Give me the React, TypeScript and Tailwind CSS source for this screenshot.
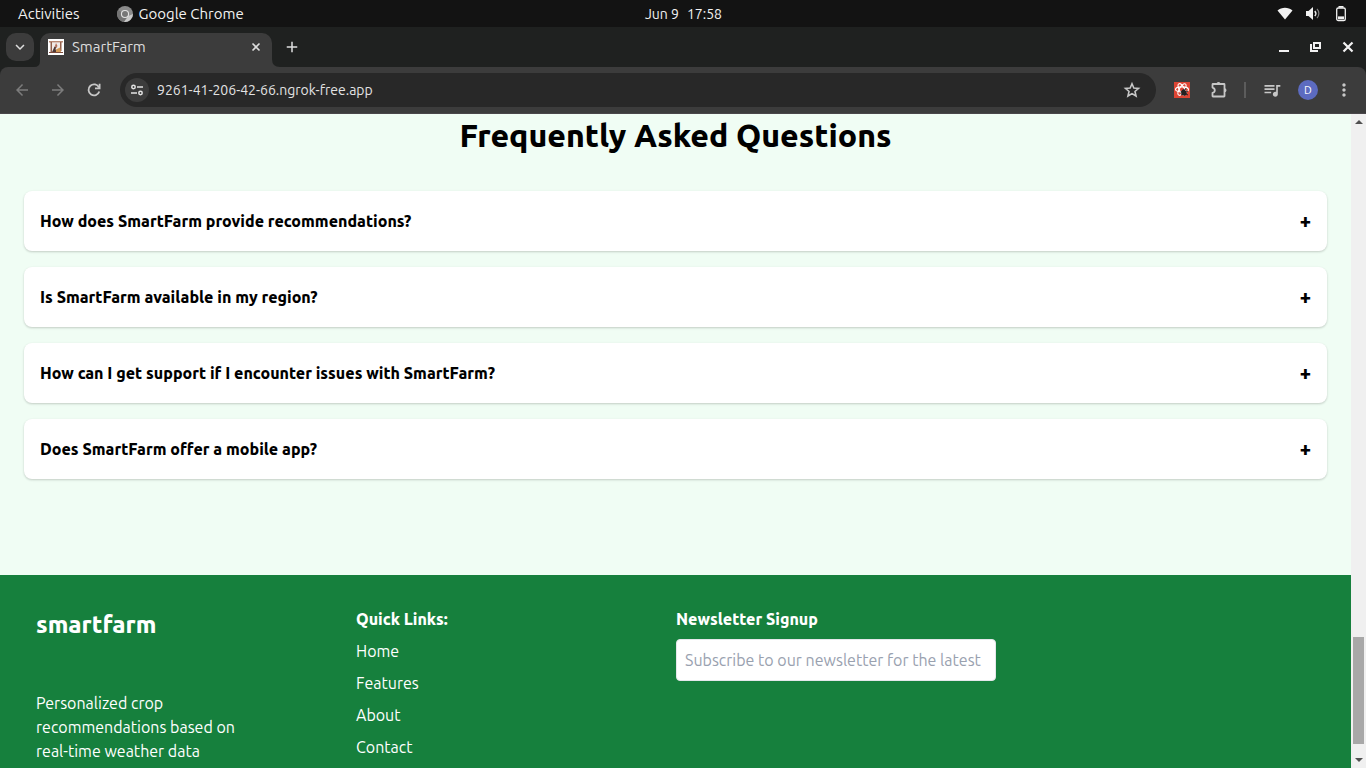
import { useState } from "react";
import {
  MdAdd,
  MdArrowBack,
  MdArrowForward,
  MdKeyboardArrowDown,
  MdMoreVert,
  MdQueueMusic,
} from "react-icons/md";

const questions = [
  {
    question: "How does SmartFarm provide recommendations?",
    answer: "SmartFarm combines local weather and soil data.",
  },
  {
    question: "Is SmartFarm available in my region?",
    answer: "SmartFarm works wherever weather data is available.",
  },
  {
    question: "How can I get support if I encounter issues with SmartFarm?",
    answer: "Reach our team through the contact page.",
  },
  {
    question: "Does SmartFarm offer a mobile app?",
    answer: "SmartFarm runs in any mobile browser.",
  },
];

const links = ["Home", "Features", "About", "Contact"];

function ChromeGlyph() {
  return (
    <svg viewBox="0 0 16 16" className="size-4" aria-hidden="true">
      <circle cx="8" cy="8" r="8" fill="#8b8b8b" />
      <path d="M8 8 1.1 4A8 8 0 0 0 7 15.9L10.5 10Z" fill="#737373" />
      <path d="M11.4 10 16 8A8 8 0 0 1 7 15.9Z" fill="#c9c9c9" />
      <circle cx="8" cy="8" r="4.1" fill="#e4e4e4" />
      <circle cx="8" cy="8" r="3" fill="#777" />
    </svg>
  );
}

function StatusIcons() {
  return (
    <div className="flex items-center gap-3 text-[#f2f2f2]">
      <svg viewBox="0 0 16 16" className="size-4" fill="currentColor" aria-label="Wi-Fi">
        <path d="M.5 4.5C4.7.8 11.300.8 15.500 4.500L8 13.500Z" />
      </svg>
      <svg viewBox="0 0 16 16" className="size-4" fill="none" stroke="currentColor" aria-label="Volume">
        <path d="M1 5h2.500L8 1v13L3.500 10H1Z" fill="currentColor" stroke="none" />
        <path d="M9.800 5c1.300 1.500 1.300 3.500 0 5" strokeWidth="1.400" />
        <path d="M12 3c2.500 2.500 2.500 6.500 0 9" strokeWidth="1.200" opacity=".5" />
      </svg>
      <svg viewBox="0 0 16 16" className="size-4" fill="none" stroke="currentColor" aria-label="Battery">
        <rect x="3.700" y="2" width="8.600" height="12.500" rx="1.600" strokeWidth="1.300" />
        <path d="M5.500.8h5" strokeWidth="1.600" />
        <path d="M5 11.800h6" strokeWidth="2.800" />
      </svg>
    </div>
  );
}

function TopBar() {
  return (
    <div className="grid h-[27px] shrink-0 grid-cols-3 items-center bg-[#131313] pl-[18px] pr-[17px] text-[15px] leading-5 text-[#f2f2f2]">
      <div className="flex items-center gap-[37px]">
        <button type="button">Activities</button>
        <button type="button" className="flex items-center gap-1.5">
          <ChromeGlyph />
          Google Chrome
        </button>
      </div>
      <div className="flex justify-center gap-2 text-sm">
        <span>Jun 9</span>
        <span>17:58</span>
      </div>
      <div className="flex justify-end">
        <StatusIcons />
      </div>
    </div>
  );
}

function Favicon() {
  return (
    <svg viewBox="0 0 16 16" className="size-4 shrink-0" aria-hidden="true">
      <rect width="16" height="16" fill="#fff" />
      <path d="M1 2h14v1.500H1Z" fill="#b98974" />
      <path d="M2.500 3H4v10H2.500ZM12 3h1.500v9H12Z" fill="#94614c" />
      <path d="M4 4h8v8H4Z" fill="#f0eae7" />
      <path d="M5 11 6.500 7.500 8.500 8l-1 2 1 3H4Z" fill="#4c3735" />
      <path d="M8 4l1.500 3L8 9 7 7Z" fill="#b46e58" />
      <path d="M8 10.500l4-2 1 4.500H8Z" fill="#d29a57" />
      <path d="M1 13h14v1H1Z" fill="#7d4b3b" />
    </svg>
  );
}

function TabStrip() {
  return (
    <div className="flex h-10 shrink-0 items-end bg-[#1f2120] pl-1.5 pr-2.5 text-[#dedede]">
      <button
        type="button"
        aria-label="Search tabs"
        className="mb-1.5 grid size-7 place-items-center rounded-[10px] bg-[#3c3c3c]"
      >
        <MdKeyboardArrowDown className="size-[18px]" />
      </button>
      <svg viewBox="0 0 6 6" className="size-1.5" aria-hidden="true">
        <path d="M6 0v6H0Q6 6 6 0Z" fill="#3c3c3c" />
      </svg>
      <div className="flex h-[34px] w-[232px] items-center gap-2 rounded-t-[10px] bg-[#3c3c3c] px-2 pb-1.5">
        <Favicon />
        <span className="flex-1 text-[15px] leading-5">SmartFarm</span>
        <button type="button" aria-label="Close tab" className="grid size-4 place-items-center">
          <svg viewBox="0 0 16 16" className="size-4">
            <path d="m4.500 4.500 7 7M11.500 4.500l-7 7" stroke="currentColor" strokeWidth="1.600" />
          </svg>
        </button>
      </div>
      <svg viewBox="0 0 8 8" className="size-2" aria-hidden="true">
        <path d="M0 0v8h8Q0 8 0 0Z" fill="#3c3c3c" />
      </svg>
      <button type="button" aria-label="New tab" className="mb-2 grid size-6 place-items-center">
        <MdAdd className="size-[18px]" />
      </button>
      <div className="mb-3 ml-auto flex items-center gap-4 text-[#f2f2f2]">
        <button type="button" aria-label="Minimize" className="size-4">
          <svg viewBox="0 0 16 16" className="size-4">
            <path d="M3 12h10" stroke="currentColor" strokeWidth="2" />
          </svg>
        </button>
        <button type="button" aria-label="Restore" className="size-4">
          <svg viewBox="0 0 16 16" className="size-4" fill="none" stroke="currentColor" strokeWidth="2">
            <path d="M6 4h6v5H6ZM3 5v7h7" />
          </svg>
        </button>
        <button type="button" aria-label="Close window" className="size-4">
          <svg viewBox="0 0 16 16" className="size-4">
            <path d="m3.500 3.500 9 9M12.500 3.500l-9 9" stroke="currentColor" strokeWidth="2.200" />
          </svg>
        </button>
      </div>
    </div>
  );
}

function ExtensionGlyph() {
  return (
    <svg viewBox="0 0 16 16" className="size-4" fill="none" aria-hidden="true">
      <rect width="16" height="16" fill="#dd4534" />
      <g stroke="#fff" strokeWidth="1.100">
        <ellipse cx="8" cy="7.500" rx="6.500" ry="2.600" />
        <ellipse cx="8" cy="7.500" rx="6.500" ry="2.600" transform="rotate(60 8 7.500)" />
        <ellipse cx="8" cy="7.500" rx="6.500" ry="2.600" transform="rotate(120 8 7.500)" />
      </g>
      <path d="m8 8 2-1 2 2 1 3-2 2-3-1-1-2Z" fill="#252020" />
      <path d="m6.500 10 3-1M7 13l2-1M11 8l1-2M12 10l2-1M12 12l2 1" stroke="#252020" />
    </svg>
  );
}

function Toolbar() {
  return (
    <div className="bg-[#1f2120]">
      <div className="flex h-[47px] items-center rounded-t-lg border-b border-[#4a464a] bg-[#3c3c3c] px-3 text-[#c7c7c7]">
        <div className="flex w-[108px] items-center gap-4">
          <button type="button" aria-label="Back" className="grid size-5 place-items-center text-[#7c7c7c]">
            <MdArrowBack className="size-[18px]" />
          </button>
          <button type="button" aria-label="Forward" className="grid size-5 place-items-center text-[#7c7c7c]">
            <MdArrowForward className="size-[18px]" />
          </button>
          <button type="button" aria-label="Reload" className="grid size-5 place-items-center">
            <svg viewBox="0 0 20 20" className="size-5" fill="none" stroke="currentColor" strokeWidth="1.800">
              <path d="M15 7.500A5.500 5.500 0 1 0 15.300 11.500" />
              <path d="M15.600 3.800V8.400H11" />
            </svg>
          </button>
        </div>
        <div className="flex h-[34px] flex-1 items-center rounded-full bg-[#282828] pl-[5px] pr-3.5">
          <button
            type="button"
            aria-label="View site information"
            className="grid size-6 shrink-0 place-items-center rounded-full bg-[#3c3c3c]"
          >
            <svg viewBox="0 0 14 14" className="size-3.5" fill="none" stroke="#e3e3e3" strokeWidth="1.500">
              <circle cx="3.500" cy="4" r="1.700" />
              <path d="M7 4h6M1 10h6" />
              <circle cx="10.500" cy="10" r="1.700" />
            </svg>
          </button>
          <input
            type="text"
            aria-label="Address"
            defaultValue="9261-41-206-42-66.ngrok-free.app"
            className="ml-2 min-w-0 flex-1 bg-transparent text-sm text-[#e3e3e3] outline-none"
          />
          <button type="button" aria-label="Bookmark this tab" className="grid size-5 place-items-center">
            <svg viewBox="0 0 20 20" className="size-5" fill="none" stroke="currentColor" strokeWidth="1.600">
              <path d="m10 3.800 1.850 4.250 4.650.4-3.500 3.050 1.050 4.500L10 13.600 5.950 16 7 11.500 3.500 8.450l4.650-.4Z" />
            </svg>
          </button>
        </div>
        <div className="ml-[18px] flex items-center">
          <button type="button" aria-label="Developer tools extension">
            <ExtensionGlyph />
          </button>
          <button type="button" aria-label="Extensions" className="ml-[18px] grid h-5 w-[22px] place-items-center">
            <svg viewBox="0 0 20 20" className="size-5" fill="none" stroke="currentColor" strokeWidth="1.800" strokeLinejoin="round">
              <path d="M3.500 4.500Q3.500 4 4 4H15Q15.500 4 15.500 4.500V16Q15.500 16.500 15 16.500H4Q3.500 16.500 3.500 16V13Q5.800 12.500 5.800 10.300T3.500 7.600Z" />
              <path d="M7.500 4a2 2 0 0 1 4 0ZM15.500 8.300a2 2 0 0 1 0 4Z" fill="currentColor" stroke="none" />
            </svg>
          </button>
          <span className="ml-3.5 h-4 w-0.5 bg-[#5c5c5c]" />
          <button type="button" aria-label="Media controls" className="ml-4">
            <MdQueueMusic className="size-5" />
          </button>
          <button
            type="button"
            aria-label="Profile"
            className="ml-4 grid size-5 place-items-center rounded-full bg-[#5c6bc0] text-[11px] text-white"
          >
            D
          </button>
          <button type="button" aria-label="Menu" className="ml-4">
            <MdMoreVert className="size-5" />
          </button>
        </div>
      </div>
    </div>
  );
}

function Faq() {
  const [open, setOpen] = useState<number | null>(null);
  return (
    <section className="bg-[#f0fdf4] px-6 pb-24 text-black">
      <h2 className="mb-[34px] text-center text-[32px] font-extrabold leading-[43px]">Frequently Asked Questions</h2>
      <div className="flex flex-col gap-4">
        {questions.map((item, index) => (
          <div
            key={item.question}
            className="rounded-lg bg-white p-4 shadow-[0_1px_3px_rgba(0,0,0,0.1),0_1px_2px_rgba(0,0,0,0.1)]"
          >
            <button
              type="button"
              aria-expanded={open === index}
              onClick={() => setOpen(open === index ? null : index)}
              className="flex w-full items-center justify-between text-left text-base font-extrabold leading-7"
            >
              <span>{item.question}</span>
              <span className="text-xl leading-7">{open === index ? "−" : "+"}</span>
            </button>
            {open === index && <p className="mt-2">{item.answer}</p>}
          </div>
        ))}
      </div>
    </section>
  );
}

function Footer() {
  return (
    <footer className="flex-1 bg-[#16803d] px-9 py-8 text-base text-white">
      <div className="grid grid-cols-[320px_320px_320px]">
        <div>
          <h2 className="mb-12 text-2xl font-extrabold leading-9">smartfarm</h2>
          <p className="w-56">Personalized crop recommendations based on real-time weather data</p>
        </div>
        <nav aria-labelledby="quick-links">
          <h3 id="quick-links" className="font-extrabold">
            Quick Links:
          </h3>
          <ul className="mt-2 flex flex-col gap-2">
            {links.map((link) => (
              <li key={link}>
                <a href={"#" + link.toLowerCase()}>{link}</a>
              </li>
            ))}
          </ul>
        </nav>
        <div>
          <label htmlFor="newsletter" className="block font-extrabold">
            Newsletter Signup
          </label>
          <input
            id="newsletter"
            type="email"
            placeholder="Subscribe to our newsletter for the latest"
            className="mt-2 w-full rounded border border-gray-200 bg-white p-2 text-gray-900 placeholder:text-gray-400"
          />
        </div>
      </div>
    </footer>
  );
}

function Scrollbar() {
  return (
    <div className="flex w-[15px] shrink-0 flex-col items-center justify-between bg-[#f0f0f0] py-1.5" aria-hidden="true">
      <svg viewBox="0 0 8 4" className="h-1 w-2">
        <path d="M0 4 4 0l4 4Z" fill="#505050" />
      </svg>
      <div className="flex w-full flex-1 flex-col justify-end px-0.5 pb-3.5">
        <div className="h-[107px] w-full bg-[#a8a8a8]" />
      </div>
      <svg viewBox="0 0 8 4" className="h-1 w-2">
        <path d="M0 0h8L4 4Z" fill="#505050" />
      </svg>
    </div>
  );
}

export default function App() {
  return (
    <div className="flex h-screen flex-col overflow-hidden font-['Ubuntu','Noto_Sans',sans-serif]">
      <TopBar />
      <TabStrip />
      <Toolbar />
      <div className="flex min-h-0 flex-1">
        <main className="flex min-w-0 flex-1 flex-col overflow-hidden">
          <Faq />
          <Footer />
        </main>
        <Scrollbar />
      </div>
    </div>
  );
}
